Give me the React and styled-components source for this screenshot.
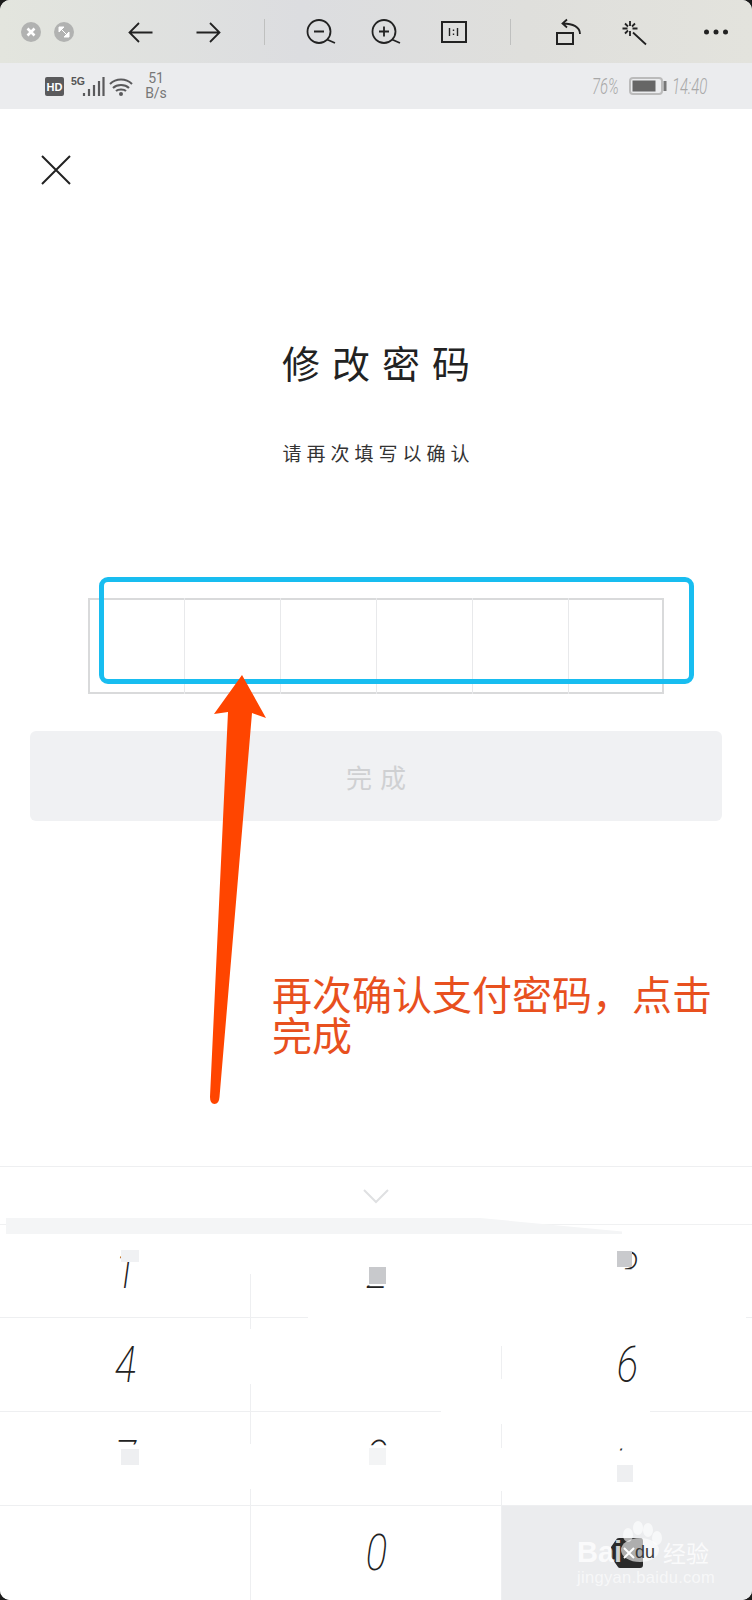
import React from 'react';
import styled, { createGlobalStyle } from 'styled-components';

const GlobalStyle = createGlobalStyle`
  html, body {
    margin: 0;
    padding: 0;
    background: #1c1c1c;
  }
  * {
    box-sizing: border-box;
  }
`;

const Screen = styled.div`
  position: relative;
  display: flex;
  flex-direction: column;
  width: 752px;
  height: 1600px;
  overflow: hidden;
  border-radius: 10px;
  background: #ffffff;
  font-family: 'Noto Sans CJK SC', 'Liberation Sans', sans-serif;
`;

const Toolbar = styled.div`
  display: flex;
  align-items: center;
  flex: none;
  height: 63px;
  padding: 0 0 0 21px;
  background: linear-gradient(90deg, #e3e5de, #dcdde0 40%, #dfdfdc 70%, #e3e3dd);
`;

const WindowButton = styled.svg`
  flex: none;
  width: 20px;
  height: 20px;
  margin-right: 13px;
`;

const ToolIcon = styled.svg`
  flex: none;
  width: 30px;
  height: 30px;
  margin-left: ${(p) => p.$left}px;
  fill: none;
  stroke: #222222;
  stroke-width: 1.8;
`;

const ToolDivider = styled.div`
  flex: none;
  width: 1px;
  height: 26px;
  margin-left: ${(p) => p.$left}px;
  background: #bfc0bf;
`;

const StatusBar = styled.div`
  display: flex;
  align-items: center;
  flex: none;
  height: 46px;
  padding: 0 45px;
  background: #ebecee;
`;

const StatusIcons = styled.svg`
  flex: none;
  width: 88px;
  height: 22px;
`;

const Speed = styled.div`
  width: 24px;
  margin-left: 11px;
  color: #777777;
  font-family: 'Roboto', sans-serif;
  font-size: 14px;
  line-height: 15px;
  text-align: center;
`;

const StatusRight = styled.div`
  display: flex;
  align-items: center;
  gap: 5px;
  margin-left: auto;
  color: #a8a8a8;
  font-family: 'Roboto', sans-serif;
  font-size: 22px;
  font-weight: 300;
  font-style: italic;
`;

const NarrowText = styled.span`
  display: inline-block;
  width: ${(p) => p.$w}px;
  transform: scaleX(0.68);
  transform-origin: left center;
  white-space: nowrap;
`;

const Battery = styled.svg`
  flex: none;
  width: 38px;
  height: 18px;
`;

const Content = styled.main`
  flex: 1;
  display: flex;
  flex-direction: column;
`;

const CloseIcon = styled.svg`
  flex: none;
  width: 30px;
  height: 30px;
  margin: 46px 0 0 41px;
  fill: none;
  stroke: #222222;
  stroke-width: 2;
`;

const Title = styled.h1`
  margin: 158px 0 0;
  padding-left: 12px;
  color: #222222;
  font-size: 38px;
  font-weight: 400;
  line-height: 37px;
  letter-spacing: 12px;
  text-align: center;
`;

const Subtitle = styled.p`
  margin: 64px 0 0;
  padding-left: 5px;
  color: #333333;
  font-size: 19px;
  line-height: 18px;
  letter-spacing: 5px;
  text-align: center;
`;

const CodeBox = styled.div`
  display: grid;
  grid-template-columns: repeat(6, 96px);
  width: 576px;
  height: 96px;
  margin: 136px 0 0 88px;
  box-shadow: inset 0 0 0 2px #d9dadb;
`;

const CodeCell = styled.div`
  border-left: ${(p) => (p.$first ? 'none' : '1px solid #e8e9eb')};
`;

const DoneButton = styled.div`
  display: flex;
  align-items: center;
  justify-content: center;
  width: 692px;
  height: 90px;
  margin: 37px 0 0 30px;
  padding-left: 8px;
  border-radius: 6px;
  background: #f0f1f3;
  color: #cfd0d2;
  font-size: 26px;
  letter-spacing: 8px;
`;

const Highlight = styled.div`
  position: absolute;
  left: 99px;
  top: 577px;
  width: 595px;
  height: 107px;
  border: 5px solid #18bdf0;
  border-radius: 9px;
`;

const ArrowMark = styled.svg`
  position: absolute;
  left: 200px;
  top: 670px;
  width: 80px;
  height: 440px;
`;

const Note = styled.div`
  position: absolute;
  left: 272px;
  top: 973px;
  width: 450px;
  color: #e8501e;
  font-size: 40px;
  line-height: 41px;
`;

const Keyboard = styled.div`
  position: relative;
  flex: none;
  border-top: 1px solid #eeeff1;
`;

const HideBar = styled.div`
  display: flex;
  align-items: center;
  justify-content: center;
  height: 58px;
  border-bottom: 1px solid #f0f1f2;
`;

const Chevron = styled.svg`
  width: 26px;
  height: 16px;
  fill: none;
  stroke: #dfe0e2;
  stroke-width: 2;
`;

const KeyGrid = styled.div`
  display: grid;
  grid-template-columns: 251px 251px 1fr;
  grid-template-rows: 93px 94px 94px 94px;
`;

const Key = styled.div`
  display: flex;
  align-items: center;
  justify-content: center;
  border-right: ${(p) => (p.$last ? 'none' : '1px solid #eeeff1')};
  border-bottom: ${(p) => (p.$bottom ? 'none' : '1px solid #eeeff1')};
  background: ${(p) => (p.$dark ? '#ebecee' : '#ffffff')};
`;

const Digit = styled.span`
  display: block;
  height: 36px;
  color: #222222;
  font-family: 'Roboto', sans-serif;
  font-size: 50px;
  font-weight: 200;
  font-style: italic;
  line-height: 36px;
  transform: scaleX(0.8);
  clip-path: ${(p) => p.$clip || 'none'};
`;

const BackspaceIcon = styled.svg`
  width: 34px;
  height: 32px;
`;

// white rubbed-out strokes and the flat patches left over the keypad
const Smudge = styled.div`
  position: absolute;
  left: ${(p) => p.$x}px;
  top: ${(p) => p.$y - 1166}px;
  width: ${(p) => p.$w}px;
  height: ${(p) => p.$h}px;
  background: ${(p) => p.$color || '#ffffff'};
  clip-path: ${(p) => p.$clip || 'none'};
`;

const Watermark = styled.div`
  position: absolute;
  left: 577px;
  top: 1518px;
  width: 140px;
  height: 68px;
  color: rgba(255, 255, 255, 0.78);
  font-family: 'Liberation Sans', sans-serif;
`;

const MarkPaw = styled.svg`
  position: absolute;
  left: 42px;
  top: 0;
  width: 46px;
  height: 46px;
`;

const MarkBai = styled.span`
  position: absolute;
  left: 0;
  top: 19px;
  font-size: 29px;
  font-weight: 700;
  line-height: 30px;
`;

const MarkDu = styled.span`
  position: absolute;
  left: 58px;
  top: 24px;
  color: #3a3a3a;
  font-size: 18px;
  line-height: 20px;
`;

const MarkCn = styled.span`
  position: absolute;
  left: 86px;
  top: 21px;
  font-family: 'Noto Sans CJK SC', sans-serif;
  font-size: 23px;
  line-height: 26px;
`;

const MarkUrl = styled.span`
  position: absolute;
  left: 0;
  top: 50px;
  color: rgba(255, 255, 255, 0.62);
  font-size: 16.5px;
  line-height: 18px;
  letter-spacing: 0.3px;
  white-space: nowrap;
`;

const rubbed = [
  { $x: 245, $y: 1226, $w: 10, $h: 47 },
  { $x: 245, $y: 1328, $w: 10, $h: 55 },
  { $x: 245, $y: 1443, $w: 10, $h: 45 },
  { $x: 496, $y: 1226, $w: 10, $h: 119 },
  { $x: 496, $y: 1378, $w: 10, $h: 45 },
  { $x: 496, $y: 1447, $w: 10, $h: 43 },
  { $x: 308, $y: 1314, $w: 438, $h: 6 },
  { $x: 441, $y: 1408, $w: 209, $h: 6 },
];

const patches = [
  { $x: 121, $y: 1249, $w: 18, $h: 12, $color: '#f0f1f3' },
  { $x: 369, $y: 1266, $w: 17, $h: 17, $color: '#c8c9cc' },
  { $x: 617, $y: 1250, $w: 15, $h: 16, $color: '#c9cacd' },
  { $x: 121, $y: 1448, $w: 18, $h: 16, $color: '#eeeff1' },
  { $x: 369, $y: 1447, $w: 17, $h: 17, $color: '#f3f4f5' },
  { $x: 617, $y: 1464, $w: 16, $h: 17, $color: '#eeeff1' },
];

const App = () => {
  return (
    <Screen>
      <GlobalStyle />
      <Toolbar>
        <WindowButton viewBox="0 0 20 20">
          <circle cx="10" cy="10" r="10" fill="#b1b2b1" />
          <path d="M6.5 6.5l7 7M13.5 6.5l-7 7" stroke="#ffffff" strokeWidth="2.6" />
        </WindowButton>
        <WindowButton viewBox="0 0 20 20">
          <circle cx="10" cy="10" r="10" fill="#b1b2b1" />
          <path d="M5 5h5L5 10zM15 15h-5l5-5zM7 7l6 6" fill="#ffffff" stroke="#ffffff" />
        </WindowButton>
        <ToolIcon $left={39} viewBox="0 0 30 30">
          <path d="M13 6l-9.5 9.5L13 25M3.5 15.5h23" />
        </ToolIcon>
        <ToolIcon $left={37} viewBox="0 0 30 30">
          <path d="M17 6l9.5 9.5L17 25M3.5 15.5h23" />
        </ToolIcon>
        <ToolDivider $left={41} />
        <ToolIcon $left={41} viewBox="0 0 30 30">
          <circle cx="13" cy="14.5" r="11.5" />
          <path d="M21 22.5l8 3.5M8 14.5h10" />
        </ToolIcon>
        <ToolIcon $left={35} viewBox="0 0 30 30">
          <circle cx="13" cy="14.5" r="11.5" />
          <path d="M21 22.5l8 3.5M8 14.5h10M13 9.5v10" />
        </ToolIcon>
        <ToolIcon $left={37} viewBox="0 0 30 30">
          <rect x="4" y="5" width="24" height="20" strokeWidth="2" />
          <path d="M11.5 11v8M19.5 11v8M15.5 12.5v1.5M15.5 16.5v1.5" strokeWidth="1.4" />
        </ToolIcon>
        <ToolDivider $left={42} />
        <ToolIcon $left={40} viewBox="0 0 30 30">
          <rect x="6" y="16" width="16" height="11" strokeWidth="2" />
          <path d="M29 17C29 10 22 6.5 12 6.5M16 2.5l-4.5 4 4.5 4" />
        </ToolIcon>
        <ToolIcon $left={38} viewBox="0 0 30 30">
          <path d="M14 15.5l13 12M11 4v5M11 14v5M3.5 11.5h5M13.5 11.5h5M6 6.5l3 3M16 6.5l-3 3M6 16.5l3-3" />
        </ToolIcon>
        <ToolIcon $left={52} viewBox="0 0 30 30">
          <circle cx="5.5" cy="15" r="2.5" fill="#222222" stroke="none" />
          <circle cx="15" cy="15" r="2.5" fill="#222222" stroke="none" />
          <circle cx="24.5" cy="15" r="2.5" fill="#222222" stroke="none" />
        </ToolIcon>
      </Toolbar>

      <StatusBar>
        <StatusIcons viewBox="0 0 88 22">
          <rect x="0" y="2" width="19" height="19" rx="2" fill="#5a5a5c" />
          <text x="9.5" y="16" fill="#ffffff" fontFamily="Liberation Sans" fontSize="11" fontWeight="700" textAnchor="middle">HD</text>
          <text x="26" y="10" fill="#555555" fontFamily="Liberation Sans" fontSize="10.5" fontWeight="700">5G</text>
          <path d="M39 18v3M44 14v7M49 10v11M54 6v15M58.500 2v19" stroke="#5a5a5c" strokeWidth="2.2" fill="none" />
          <path d="M65 9c6-6 16-6 22 0M68 13c4-4 12-4 16 0M71 16c2-2 8-2 10 0" stroke="#5a5a5c" strokeWidth="2" fill="none" />
          <circle cx="76" cy="19" r="2" fill="#5a5a5c" />
        </StatusIcons>
        <Speed>
          51
          <br />
          B/s
        </Speed>
        <StatusRight>
          <NarrowText $w={32}>76%</NarrowText>
          <Battery viewBox="0 0 38 18">
            <rect x="1" y="1" width="32" height="16" rx="3" fill="none" stroke="#bbbbbb" strokeWidth="2" />
            <rect x="3.500" y="3.500" width="23" height="11" fill="#666666" />
            <rect x="34.500" y="4" width="3" height="10" fill="#777777" />
          </Battery>
          <NarrowText $w={35}>14:40</NarrowText>
        </StatusRight>
      </StatusBar>

      <Content>
        <CloseIcon viewBox="0 0 30 30">
          <path d="M1 1l28 28M29 1L1 29" />
        </CloseIcon>
        <Title>修改密码</Title>
        <Subtitle>请再次填写以确认</Subtitle>
        <CodeBox>
          {[0, 1, 2, 3, 4, 5].map((i) => (
            <CodeCell key={i} $first={i === 0} />
          ))}
        </CodeBox>
        <DoneButton>完成</DoneButton>
      </Content>

      <Keyboard>
        <HideBar>
          <Chevron viewBox="0 0 26 16">
            <path d="M1 2l12 12L25 2" />
          </Chevron>
        </HideBar>
        <KeyGrid>
          <Key><Digit>1</Digit></Key>
          <Key><Digit $clip="inset(90% -10px 0 -10px)">2</Digit></Key>
          <Key $last><Digit $clip="inset(-4px -10px 55% -10px)">3</Digit></Key>
          <Key><Digit>4</Digit></Key>
          <Key />
          <Key $last><Digit>6</Digit></Key>
          <Key><Digit $clip="inset(-2px -10px 89% -10px)">7</Digit></Key>
          <Key><Digit $clip="inset(-2px -10px 87% -10px)">8</Digit></Key>
          <Key $last><Digit $clip="inset(22% 60% 72% 0)">9</Digit></Key>
          <Key $bottom />
          <Key $bottom><Digit>0</Digit></Key>
          <Key $bottom $last $dark>
            <BackspaceIcon viewBox="0 0 34 32">
              <path d="M1 10L7 1.500Q8 1 9 1H30Q33 1 33 4V28Q33 31 30 31H10Q8.500 31 8 30L1 20Z" fill="#2a2a2a" />
              <path d="M14 11l10 10M24 11L14 21" stroke="#ffffff" strokeWidth="2" />
            </BackspaceIcon>
          </Key>
        </KeyGrid>
        {rubbed.map((r, i) => (
          <Smudge key={i} {...r} />
        ))}
        <Smudge
          $x={6}
          $y={1217}
          $w={616}
          $h={16}
          $color="#f4f5f6"
          $clip="polygon(0 0, 77% 0, 100% 85%, 100% 100%, 0 100%)"
        />
        {patches.map((p, i) => (
          <Smudge key={i} {...p} />
        ))}
      </Keyboard>

      <Highlight />
      <ArrowMark viewBox="0 0 80 440">
        <path
          d="M42 5L66 48L52 43L19.500 427Q19 434 14.500 434Q10 434 10 427L28 42L14 44Z"
          fill="#ff4500"
        />
      </ArrowMark>
      <Note>{'再次确认支付密码\uFF0C点击完成'}</Note>

      <Watermark>
        <MarkPaw viewBox="0 0 46 46">
          <g fill="rgba(255,255,255,0.62)">
            <ellipse cx="9" cy="17" rx="5" ry="7" />
            <ellipse cx="19" cy="10" rx="5" ry="7" />
            <ellipse cx="29" cy="12" rx="5" ry="7" />
            <ellipse cx="38" cy="20" rx="5" ry="7" />
            <ellipse cx="21" cy="32" rx="19" ry="12" />
          </g>
        </MarkPaw>
        <MarkBai>Bai</MarkBai>
        <MarkDu>du</MarkDu>
        <MarkCn>经验</MarkCn>
        <MarkUrl>jingyan.baidu.com</MarkUrl>
      </Watermark>
    </Screen>
  );
};

export default App;
